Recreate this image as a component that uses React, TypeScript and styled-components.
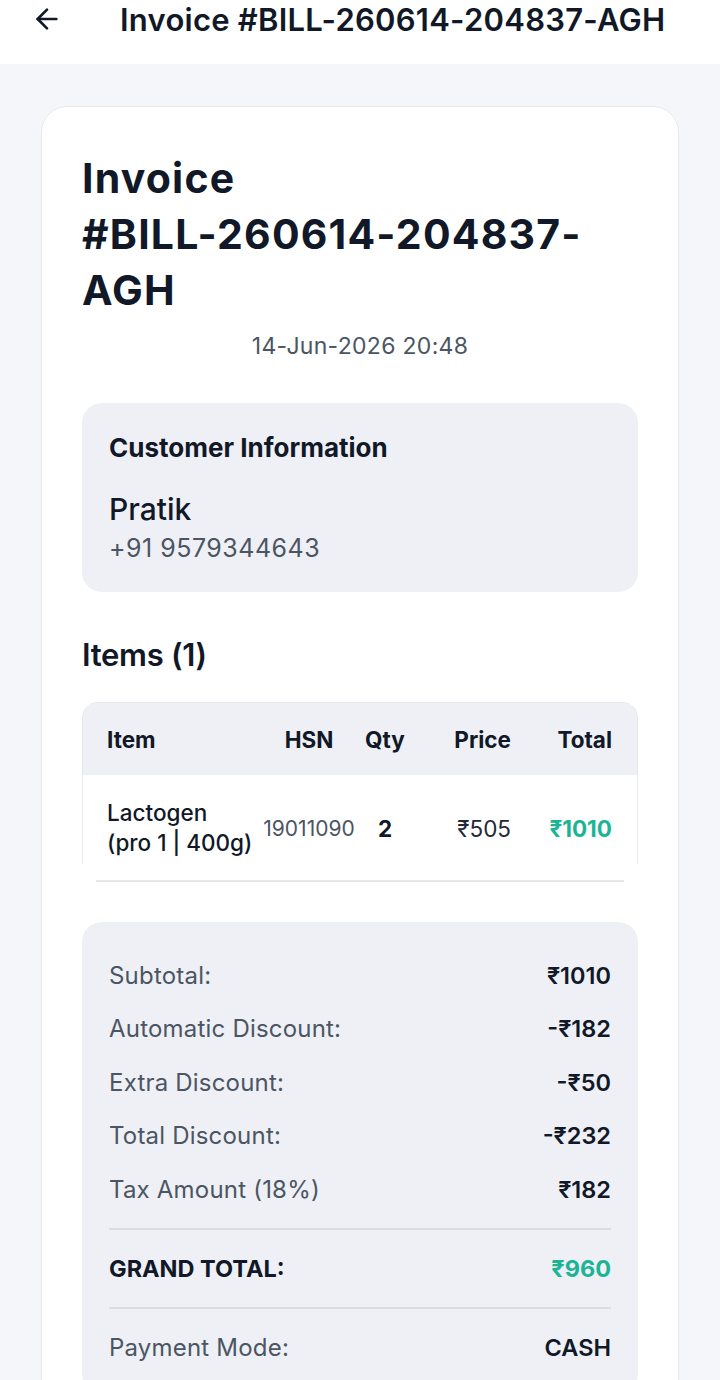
import React, { FC, ReactElement } from "react"
import styled, { createGlobalStyle } from "styled-components"
import { ArrowLeft } from "lucide-react"

const GlobalStyle = createGlobalStyle`
  body {
    margin: 0;
    background: #f5f6f9;
    font-family: Inter, "Noto Sans", sans-serif;
    color: #111827;
  }
`

type SummaryLine = { label: string; value: string }

const summary: SummaryLine[] = [
  { label: "Subtotal:", value: "₹1010" },
  { label: "Automatic Discount:", value: "-₹182" },
  { label: "Extra Discount:", value: "-₹50" },
  { label: "Total Discount:", value: "-₹232" },
  { label: "Tax Amount (18%)", value: "₹182" },
]

const App: FC = (): ReactElement => {
  return (
    <Page>
      <GlobalStyle />
      <Header>
        <BackButton aria-label="Back">
          <ArrowLeft size={32} strokeWidth={2} />
        </BackButton>
        <HeaderTitle>Invoice #BILL-260614-204837-AGH</HeaderTitle>
      </Header>
      <Content>
        <Card>
          <InvoiceTitle>
            Invoice <NoWrap>#BILL-260614-204837-</NoWrap>
            <wbr />
            AGH
          </InvoiceTitle>
          <DateText>14-Jun-2026 20:48</DateText>

          <InfoBox>
            <BoxTitle>Customer Information</BoxTitle>
            <CustomerName>Pratik</CustomerName>
            <Phone>+91 9579344643</Phone>
          </InfoBox>

          <SectionTitle>Items (1)</SectionTitle>
          <TableWrap>
            <Table>
              <colgroup>
                <col style={{ width: 175 }} />
                <col style={{ width: 102 }} />
                <col style={{ width: 50 }} />
                <col style={{ width: 113 }} />
                <col style={{ width: 114 }} />
              </colgroup>
              <thead>
                <tr>
                  <Th>Item</Th>
                  <Th align="center">HSN</Th>
                  <Th align="center">Qty</Th>
                  <Th align="right">Price</Th>
                  <Th align="right">Total</Th>
                </tr>
              </thead>
              <tbody>
                <tr>
                  <ItemCell>Lactogen<br />(pro 1 | 400g)</ItemCell>
                  <HsnCell>19011090</HsnCell>
                  <QtyCell>2</QtyCell>
                  <PriceCell>₹505</PriceCell>
                  <TotalCell>₹1010</TotalCell>
                </tr>
              </tbody>
            </Table>
          </TableWrap>
          <TableRule />

          <SummaryBox>
            {summary.map((line) => (
              <SummaryRow key={line.label}>
                <SummaryLabel>{line.label}</SummaryLabel>
                <SummaryValue>{line.value}</SummaryValue>
              </SummaryRow>
            ))}
            <Divider />
            <SummaryRow>
              <GrandLabel>GRAND TOTAL:</GrandLabel>
              <GrandValue>₹960</GrandValue>
            </SummaryRow>
            <Divider />
            <SummaryRow>
              <SummaryLabel>Payment Mode:</SummaryLabel>
              <SummaryValue>CASH</SummaryValue>
            </SummaryRow>
          </SummaryBox>
        </Card>
      </Content>
    </Page>
  )
}

export default App

const Page = styled.div`
  min-height: 1380px;
  display: flex;
  flex-direction: column;
`

const Header = styled.header`
  height: 64px;
  background: #ffffff;
  display: flex;
  align-items: flex-start;
  padding: 0 0 0 31px;
  box-sizing: border-box;
`

const BackButton = styled.button`
  display: flex;
  align-items: center;
  justify-content: center;
  background: transparent;
  border: none;
  padding: 0;
  margin-top: 3px;
  width: 32px;
  height: 32px;
  color: #111827;
`

const HeaderTitle = styled.h1`
  margin: 0 0 0 57px;
  font-size: 31px;
  line-height: 40px;
  font-weight: 600;
  letter-spacing: 0.25px;
  color: #111827;
  white-space: nowrap;
`

const Content = styled.main`
  padding: 42px 41px 0 41px;
  flex: 1;
`

const Card = styled.section`
  background: #ffffff;
  border: 1px solid #e6e8ec;
  border-radius: 26px;
  padding: 43px 40px 40px 40px;
  min-height: 1300px;
  box-sizing: border-box;
`

const InvoiceTitle = styled.h2`
  margin: 0;
  font-size: 41px;
  line-height: 56px;
  font-weight: 700;
  color: #111827;
  letter-spacing: 1.2px;
`

const NoWrap = styled.span`
  white-space: nowrap;
`

const DateText = styled.div`
  margin-top: 14px;
  text-align: center;
  font-size: 23px;
  line-height: 28px;
  color: #4b5563;
  letter-spacing: 0.3px;
`

const InfoBox = styled.div`
  margin-top: 43px;
  background: #eef0f5;
  border-radius: 20px;
  padding: 29px 27px 28px 27px;
`

const BoxTitle = styled.div`
  font-size: 26px;
  line-height: 32px;
  font-weight: 700;
  color: #111827;
`

const CustomerName = styled.div`
  margin-top: 26px;
  font-size: 30px;
  line-height: 38px;
  font-weight: 500;
  color: #111827;
`

const Phone = styled.div`
  margin-top: 4px;
  font-size: 25px;
  line-height: 32px;
  color: #4b5563;
  letter-spacing: 0.5px;
`

const SectionTitle = styled.h3`
  margin: 43px 0 0 0;
  font-size: 31px;
  line-height: 40px;
  font-weight: 600;
  color: #111827;
  letter-spacing: -0.3px;
`

const TableWrap = styled.div`
  margin-top: 27px;
  border: 1px solid #e6e8ec;
  border-bottom: none;
  border-radius: 16px 16px 0 0;
  overflow: hidden;
`

const Table = styled.table`
  width: 100%;
  border-collapse: collapse;
  table-layout: fixed;
`

const Th = styled.th<{ align?: "left" | "right" | "center" }>`
  background: #eef0f5;
  height: 72px;
  padding: 0;
  text-align: ${({ align }) => align ?? "left"};
  font-size: 22.5px;
  font-weight: 700;
  color: #111827;
  &:first-child {
    padding-left: 24px;
  }
  &:nth-child(4) {
    padding-right: 12px;
  }
  &:last-child {
    padding-right: 25px;
  }
`

const Td = styled.td`
  padding: 23px 0 6px 0;
  font-size: 22.5px;
  color: #111827;
  vertical-align: middle;
`

const ItemCell = styled(Td)`
  padding-left: 24px;
  font-weight: 500;
  line-height: 30px;
  white-space: nowrap;
`

const HsnCell = styled(Td)`
  font-size: 21px;
  color: #4b5563;
  text-align: center;
`

const QtyCell = styled(Td)`
  font-weight: 700;
  text-align: center;
`

const PriceCell = styled(Td)`
  text-align: right;
  color: #1f2937;
  padding-right: 12px;
`

const TotalCell = styled(Td)`
  text-align: right;
  font-weight: 700;
  color: #1db496;
  padding-right: 25px;
`

const TableRule = styled.div`
  margin: 16px 14px 0 14px;
  height: 1.5px;
  background: #e5e7eb;
`

const SummaryBox = styled.div`
  margin-top: 40px;
  background: #eef0f5;
  border-radius: 20px;
  padding: 27px 27px 20px 27px;
`

const SummaryRow = styled.div`
  display: flex;
  justify-content: space-between;
  align-items: center;
  height: 53.5px;
`

const SummaryLabel = styled.span`
  font-size: 24px;
  color: #4b5563;
  letter-spacing: 0.2px;
`

const SummaryValue = styled.span`
  font-size: 23.5px;
  font-weight: 600;
  color: #111827;
`

const GrandLabel = styled.span`
  font-size: 23.5px;
  font-weight: 700;
  color: #111827;
`

const GrandValue = styled.span`
  font-size: 23.5px;
  font-weight: 700;
  color: #1db496;
`

const Divider = styled.div`
  height: 1.5px;
  background: #d9dde3;
  margin: 12px 0;
`
